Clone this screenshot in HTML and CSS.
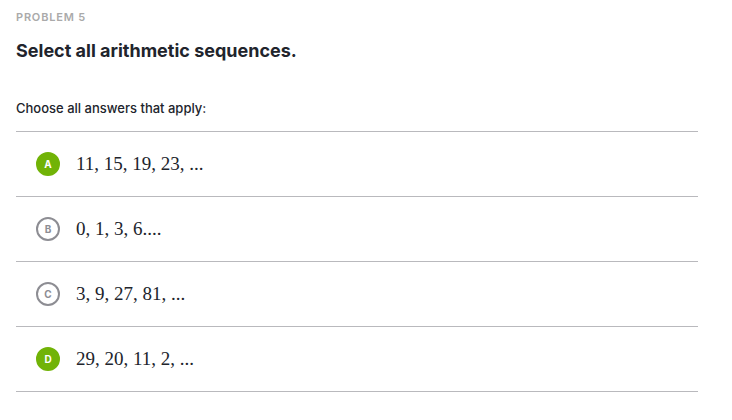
FILE: index.html
```html
<!DOCTYPE html>
<html>
<head>
<meta charset="utf-8">
<link rel="stylesheet" href="styles.css">
</head>
<body>
<div class="page">
  <div class="eyebrow">PROBLEM 5</div>
  <h1 class="title">Select all arithmetic sequences.</h1>
  <div class="prompt">Choose all answers that apply:</div>
  <ul class="choices">
    <li class="choice"><span class="bubble selected">A</span><span class="math">11, 15, 19, 23, ...</span></li>
    <li class="choice"><span class="bubble">B</span><span class="math">0, 1, 3, 6....</span></li>
    <li class="choice"><span class="bubble">C</span><span class="math">3, 9, 27, 81, ...</span></li>
    <li class="choice"><span class="bubble selected">D</span><span class="math">29, 20, 11, 2, ...</span></li>
  </ul>
</div>
</body>
</html>
```

FILE: styles.css
```css
html, body {
  margin: 0;
  padding: 0;
  background: #ffffff;
}
.page {
  padding: 9px 34px 0 16px;
  font-family: "Inter", "Liberation Sans", sans-serif;
  color: #21242c;
}
.eyebrow {
  font-size: 11px;
  font-weight: 600;
  letter-spacing: 0.8px;
  color: #aaaaaa;
  line-height: 16px;
}
.title {
  margin: 14px 0 0 0;
  font-size: 18px;
  font-weight: 700;
  line-height: 24px;
}
.prompt {
  margin-top: 36px;
  font-size: 13px;
  font-weight: 500;
  line-height: 18px;
}
.choices {
  list-style: none;
  margin: 14px 0 0 0;
  padding: 0;
  border-top: 1px solid #b9b9bd;
}
.choice {
  height: 64px;
  border-bottom: 1px solid #b9b9bd;
  display: flex;
  align-items: center;
  padding-left: 20px;
}
.bubble {
  box-sizing: border-box;
  width: 24px;
  height: 24px;
  border-radius: 50%;
  border: 2px solid #8d8d93;
  color: #8d8d93;
  font-size: 10px;
  font-weight: 700;
  display: flex;
  align-items: center;
  justify-content: center;
  font-family: "Inter", "Liberation Sans", sans-serif;
}
.bubble.selected {
  background: #71b307;
  border-color: #71b307;
  color: #ffffff;
}
.math {
  margin-left: 16px;
  font-family: "Liberation Serif", serif;
  font-size: 19px;
  color: #21242c;
}
```
